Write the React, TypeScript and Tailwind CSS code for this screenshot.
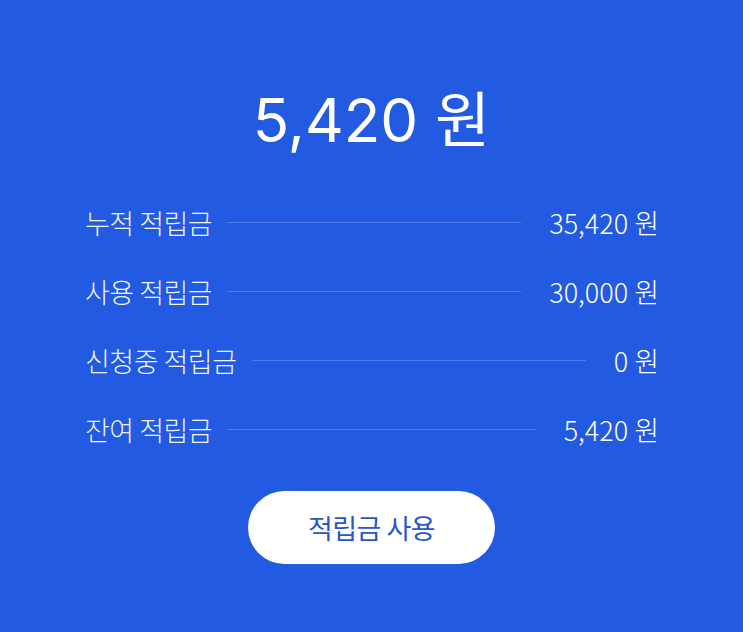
const rows = [
  { label: "누적 적립금", value: "35,420" },
  { label: "사용 적립금", value: "30,000" },
  { label: "신청중 적립금", value: "0" },
  { label: "잔여 적립금", value: "5,420" },
]

export default function App() {
  return (
    <div
      className="min-h-[632px] w-full bg-[#225ae2] flex flex-col items-center text-white"
      style={{ fontFamily: '"Noto Sans CJK KR", "Noto Sans", sans-serif' }}
    >
      <h1
        className="mt-[90px] text-[60px] leading-none font-normal"
        style={{ fontFamily: 'Inter, "Noto Sans CJK KR", sans-serif' }}
      >
        5,420 원
      </h1>

      <div className="mt-[38px] w-full pl-[85px] pr-[84px]">
        {rows.map((row) => (
          <div key={row.label} className="flex items-center h-[69px]">
            <span className="text-[27px] font-light leading-none tracking-[-0.5px] text-white/95">{row.label}</span>
            <div className="flex-1 h-px bg-white/20 ml-[15px] mr-[28px]" />
            <span className="text-[27px] font-light leading-none">{row.value} 원</span>
          </div>
        ))}
      </div>

      <button className="mt-[27px] w-[247px] h-[73px] rounded-full bg-white text-[#2a55cc] text-[27px] leading-none tracking-[-0.5px]">
        적립금 사용
      </button>
    </div>
  )
}
